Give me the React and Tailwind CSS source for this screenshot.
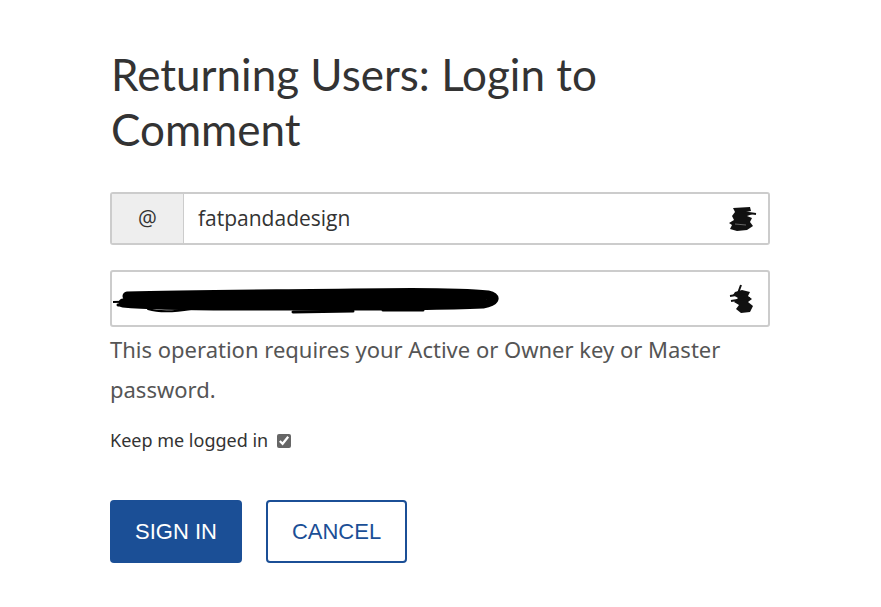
import { useState } from 'react';

function Smudge({ variant }) {
  // redacted password-manager icons in the reference
  if (variant === 'user') {
    return (
      <svg width="34" height="30" viewBox="0 0 34 30" className="shrink-0">
        <path d="M7 4 L24 3 L25 7 L20 8 L27 10 L21 12 L26 14 L24 18 L27 22 L21 26 L11 27 L4 25 L6 21 L3 19 L8 16 L6 12 L9 8 Z" fill="#111" />
        <path d="M16 8 L30 10" stroke="#111" strokeWidth="2" />
        <path d="M9 20 L20 21" stroke="#666" strokeWidth="1" />
      </svg>
    );
  }
  return (
    <svg width="34" height="34" viewBox="0 0 34 34" className="shrink-0">
      <path d="M9 10 L16 8 L24 10 L22 14 L26 17 L22 20 L27 24 L24 30 L15 31 L10 27 L13 23 L8 20 L12 16 L7 13 Z" fill="#111" />
      <path d="M4 14 L22 11 M5 19 L24 16 M15 3 L11 14" stroke="#111" strokeWidth="2" fill="none" />
    </svg>
  );
}

function Scribble() {
  return (
    <svg width="390" height="34" viewBox="0 0 390 34" className="shrink-0">
      <g stroke="#000" strokeLinecap="round" fill="none">
        <path d="M14 14 C80 12 160 12 240 11 C300 10 350 10 375 13 C385 15 382 20 370 22 C300 25 200 24 120 24 C70 24 30 23 10 21" strokeWidth="9" />
        <path d="M20 17 C100 16 200 16 370 17" strokeWidth="7" />
        <path d="M0 20 L40 19" strokeWidth="2" />
        <path d="M35 27 C45 30 60 30 78 27" strokeWidth="2" />
        <path d="M180 30 L240 29" strokeWidth="3" />
        <path d="M270 28 L310 28" strokeWidth="3" />
        <path d="M210 8 L280 9" strokeWidth="2" />
        <path d="M320 10 L360 11" strokeWidth="2" />
        <path d="M5 23 C60 26 150 26 260 25" strokeWidth="3" />
      </g>
    </svg>
  );
}

export default function App() {
  const [keep, setKeep] = useState(true);

  return (
    <div className="min-h-screen bg-white" style={{ fontFamily: 'Lato, "Open Sans", sans-serif' }}>
      <div className="w-[660px] ml-[110px] pt-[47px]">
        <h1 className="max-w-[560px] text-[44px] leading-[55px] text-[#333] font-normal pl-[1px]">
          Returning Users: Login to Comment
        </h1>

        {/* Username */}
        <div className="mt-[35px] flex h-[53px] border-2 border-[#ccc] rounded-[3px] overflow-hidden">
          <div className="w-[72px] bg-[#eeeeee] border-r border-[#ccc] flex items-center justify-center text-[21px] text-[#333] font-['Open_Sans']">
            @
          </div>
          <div className="flex-1 flex items-center pl-[14px] pr-[8px] bg-white">
            <span className="flex-1 text-[21px] text-[#333] font-['Open_Sans']">fatpandadesign</span>
            <Smudge variant="user" />
          </div>
        </div>

        {/* Password */}
        <div className="mt-[25px] flex items-center h-[57px] border-2 border-[#ccc] rounded-[3px] pl-[1px] pr-[8px]">
          <div className="flex-1">
            <Scribble />
          </div>
          <Smudge variant="key" />
        </div>

        <p className="mt-[2px] text-[22px] leading-[40px] text-[#555] font-['Noto_Sans']">
          This operation requires your Active or Owner key or Master password.
        </p>

        <label className="mt-[18px] flex items-center gap-[9px] text-[18px] text-[#333] font-['Noto_Sans']">
          Keep me logged in
          <input
            type="checkbox"
            checked={keep}
            onChange={() => setKeep(!keep)}
            className="w-[14px] h-[14px] accent-[#666]"
          />
        </label>

        <div className="mt-[46px] flex gap-[24px] font-['Liberation_Sans']">
          <button className="w-[132px] h-[63px] bg-[#1b4f96] text-white text-[22px] rounded-[4px]">
            SIGN IN
          </button>
          <button className="w-[141px] h-[63px] bg-white border-2 border-[#1b4f96] text-[#1b4f96] text-[22px] rounded-[4px]">
            CANCEL
          </button>
        </div>
      </div>
    </div>
  );
}
